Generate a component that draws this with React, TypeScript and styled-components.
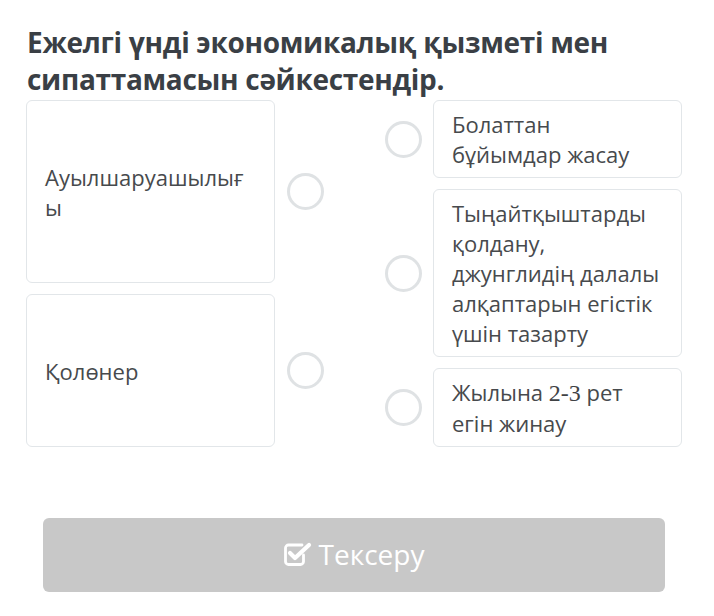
import React from "react";
import styled, { createGlobalStyle } from "styled-components";

const Global = createGlobalStyle`
  html, body { margin: 0; padding: 0; background: #ffffff; }
  body { font-family: "Open Sans", "Noto Sans", sans-serif; }
`;

const Page = styled.div`
  width: 714px;
  height: 616px;
  box-sizing: border-box;
  padding: 24px 32px 0 26px;
  display: flex;
  flex-direction: column;
`;

const Title = styled.h1`
  margin: 0 0 2px 1px;
  font-size: 28px;
  line-height: 37px;
  font-weight: 700;
  color: #3a3f45;
  letter-spacing: -0.3px;
`;

const Board = styled.div`
  display: flex;
  justify-content: space-between;
  width: 656px;
`;

const Column = styled.div`
  display: flex;
  flex-direction: column;
  gap: 11px;
  width: 309px;
`;

const Item = styled.div<{ $grow?: boolean }>`
  display: flex;
  align-items: center;
  flex: ${(p) => (p.$grow ? "1 1 auto" : "0 0 auto")};
`;

const Card = styled.div<{ $padY: number }>`
  box-sizing: border-box;
  width: 249px;
  align-self: stretch;
  display: flex;
  align-items: center;
  padding: ${(p) => p.$padY}px 19px ${(p) => p.$padY}px 18px;
  border: 1px solid #e2e6e9;
  border-radius: 6px;
  background: #ffffff;
  font-size: 22px;
  line-height: 30px;
  color: #474a4d;
  overflow-wrap: anywhere;
`;

const RadioSlot = styled.div`
  width: 60px;
  display: flex;
  justify-content: center;
  align-items: center;
  flex-shrink: 0;
`;

const Radio = styled.div`
  width: 37px;
  height: 37px;
  box-sizing: border-box;
  border-radius: 50%;
  border: 3px solid #dfe2e4;
  background: #ffffff;
`;

const MathNum = styled.span`
  font-family: "Liberation Serif", serif !important;
  font-size: 24px;
  color: #3f4245;
`;

const Button = styled.button`
  margin: 71px 0 0 17px;
  width: 622px;
  height: 74px;
  border: none;
  border-radius: 6px;
  background: #c8c8c8;
  color: #ffffff;
  font-family: "Open Sans", "Noto Sans", sans-serif;
  font-size: 28px;
  display: flex;
  align-items: center;
  justify-content: center;
  gap: 7px;
  padding: 0 0 2px 0;
`;

const CheckIcon = () => (
  <svg width="28" height="24" viewBox="0 0 28 24" fill="none">
    <path
      d="M18 3 H4.5 a3 3 0 0 0 -3 3 V19.5 a3 3 0 0 0 3 3 H16.5 a3 3 0 0 0 3 -3 V13"
      stroke="#ffffff"
      strokeWidth="2.8"
      strokeLinecap="round"
    />
    <path
      d="M6 11 L11 16 L25 3"
      stroke="#ffffff"
      strokeWidth="4.2"
      strokeLinecap="round"
      strokeLinejoin="round"
    />
  </svg>
);

export default function App() {
  return (
    <>
      <Global />
      <Page>
        <Title>
          Ежелгі үнді экономикалық қызметі мен сипаттамасын сәйкестендір.
        </Title>
        <Board>
          <Column>
            <Item $grow>
              <Card $padY={12}>Ауылшаруашылығы</Card>
              <RadioSlot>
                <Radio />
              </RadioSlot>
            </Item>
            <Item $grow>
              <Card $padY={12}>Қолөнер</Card>
              <RadioSlot>
                <Radio />
              </RadioSlot>
            </Item>
          </Column>
          <Column>
            <Item>
              <RadioSlot>
                <Radio />
              </RadioSlot>
              <Card $padY={8}>Болаттан бұйымдар жасау</Card>
            </Item>
            <Item>
              <RadioSlot>
                <Radio />
              </RadioSlot>
              <Card $padY={8}>
                Тыңайтқыштарды қолдану, джунглидің далалы алқаптарын егістік үшін
                тазарту
              </Card>
            </Item>
            <Item>
              <RadioSlot>
                <Radio />
              </RadioSlot>
              <Card $padY={8}>
                <span>
                  Жылына <MathNum>2-3</MathNum> рет егін жинау
                </span>
              </Card>
            </Item>
          </Column>
        </Board>
        <Button>
          <CheckIcon />
          Тексеру
        </Button>
      </Page>
    </>
  );
}
